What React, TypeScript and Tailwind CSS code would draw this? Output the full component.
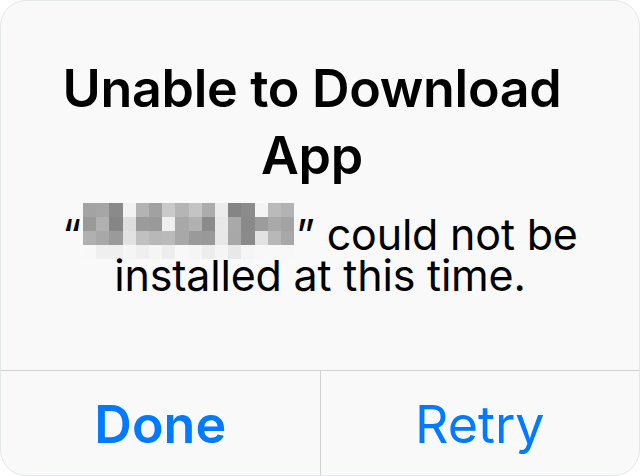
const MOSAIC: string[][] = [
  ['#a3a3a3', '#a6a6a6', '#8a8a8a', '#f2f2f2', '#b3b3b3', '#a1a1a1', '#c9c9c9', '#b5b5b5', '#c4c4c4', '#acacac', '#ececec', '#858585', '#8b8b8b', '#f4f4f4', '#bababa', '#b3b3b3'],
  ['#9a9a9a', '#b1b1b1', '#868686', '#dedede', '#9b9b9b', '#999999', '#efefef', '#a8a8a8', '#b1b1b1', '#8b8b8b', '#e8e8e8', '#a9a9a9', '#898989', '#9c9c9c', '#a9a9a9', '#a3a3a3'],
  ['#b0b0b0', '#a8a8a8', '#9a9a9a', '#e2e2e2', '#c0c0c0', '#b8b8b8', '#bababa', '#a8a8a8', '#9a9a9a', '#999999', '#e8e8e8', '#a8a8a8', '#8a8a8a', '#e2e2e2', '#b8b8b8', '#a8a8a8'],
  ['#f8f8f8', '#efefef', '#efefef', '#f5f5f5', '#efefef', '#f5f5f5', '#ededed', '#f8f8f8', '#f5f5f5', '#ededed', '#f5f5f5', '#e8e8e8', '#f5f5f5', '#f8f8f8', '#f8f8f8', '#f8f8f8'],
];

// blurred app name; bottom sits 9px under the text baseline
function Mosaic() {
  return (
    <span className="mx-[2px] mt-[-12px] mb-[-9px] inline-block h-[56px] w-[211px] overflow-hidden">
      {MOSAIC.map((row, r) => (
        <span key={r} className="flex h-[14px]">
          {row.map((c, i) => (
            <span key={i} className="h-full flex-1" style={{ backgroundColor: c }} />
          ))}
        </span>
      ))}
    </span>
  );
}

export default function App() {
  return (
    <div className="h-[476px] w-[640px] bg-white font-['Inter','Liberation_Sans',sans-serif]">
      <div className="flex h-full flex-col overflow-hidden rounded-[26px] border border-[#e4e8e8] bg-[#f9f9f9]">
        <div className="flex flex-1 flex-col items-center pt-[54px] text-center text-black">
          <h1 className="pr-[16px] text-[52px] leading-[67px] font-semibold tracking-[-0.3px]">
            Unable to Download
            <br />
            App
          </h1>
          <p className="mt-[25px] text-[43px] leading-[41px] tracking-[-0.2px]">
            “<Mosaic />” could not be
            <br />
            installed at this time.
          </p>
        </div>

        {/* actions */}
        <div className="flex h-[105px] border-t border-[#d2d2d2] text-[52px] text-[#007aff]">
          <button className="flex flex-1 items-center justify-center pt-[4px] font-semibold">Done</button>
          <button className="flex flex-1 items-center justify-center border-l border-[#d2d2d2] pt-[4px]">
            Retry
          </button>
        </div>
      </div>
    </div>
  );
}
